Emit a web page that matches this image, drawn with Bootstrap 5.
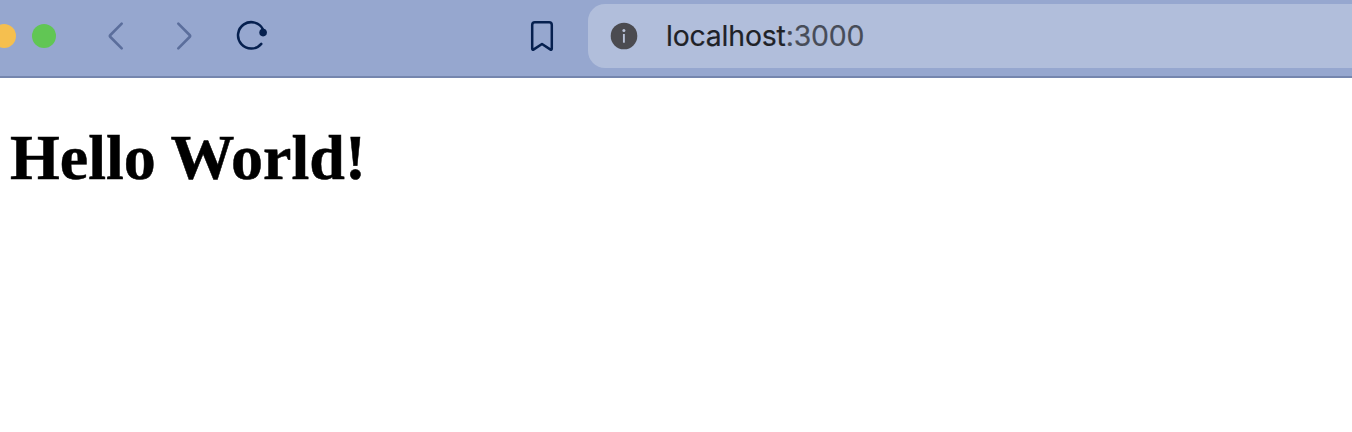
<!DOCTYPE html>
<html lang="en">
<head>
<meta charset="utf-8">
<meta name="viewport" content="width=device-width, initial-scale=1">
<title>localhost:3000</title>
<link href="https://cdn.jsdelivr.net/npm/bootstrap@5.3.0/dist/css/bootstrap.min.css" rel="stylesheet">
<style>
body { background: #fff; }
.toolbar { height: 78px; padding-bottom: 4px; background: #96a7cf; border-bottom: 2px solid #7586ae; }
.light { width: 24px; height: 24px; }
.light-min { background: #f5bf4f; margin-left: -8px; }
.light-max { background: #61c654; margin-left: 16px; }
.tool { width: 40px; height: 40px; padding: 0; border: 0; background: none; flex: none; }
.tool svg, .info { display: block; }
.dim { color: #5b6e9c; }
.ink { color: #06204f; }
.back { margin-left: 40px; }
.gap-nav { margin-left: 28px; }
.save { margin-left: 250px; }
.address { height: 64px; margin-left: 26px; padding-left: 22px; background: #b1bedb; border-radius: 17px 0 0 17px; }
.url { margin-left: 28px; font: 400 28.4px/40px Inter, sans-serif; letter-spacing: -.18px; color: #1f2227; -webkit-text-stroke: .2px currentColor; }
.port { color: #474c58; }
.greeting { margin: 0; padding: 43px 0 0 10px; font: 700 64px/74px "Liberation Serif", serif; color: #000; -webkit-text-stroke: .5px #000; }
</style>
</head>
<body class="overflow-hidden">
<header class="toolbar d-flex align-items-center">
  <span class="light light-min rounded-circle flex-shrink-0"></span>
  <span class="light light-max rounded-circle flex-shrink-0"></span>
  <button class="tool dim back" aria-label="Back">
    <svg width="40" height="40" fill="none" stroke="currentColor" stroke-width="2.6" stroke-linecap="round" stroke-linejoin="round"><path d="M25.7 7.6 14.4 19q-1 1 0 2L25.7 32.4"/></svg>
  </button>
  <button class="tool dim gap-nav" aria-label="Forward">
    <svg width="40" height="40" fill="none" stroke="currentColor" stroke-width="2.6" stroke-linecap="round" stroke-linejoin="round"><path d="M14.3 7.6 25.6 19q1 1 0 2L14.3 32.4"/></svg>
  </button>
  <button class="tool ink gap-nav" aria-label="Reload">
    <svg width="40" height="40" fill="none" stroke="currentColor" stroke-width="2.5" stroke-linecap="round"><path d="M29.3 27.9A13.2 13.2 0 1 1 31.1 13.6"/><circle cx="31.1" cy="16.6" r="3.8" fill="currentColor" stroke="none"/></svg>
  </button>
  <button class="tool ink save" aria-label="Bookmark">
    <svg width="40" height="40" fill="none" stroke="currentColor" stroke-width="2.5" stroke-linecap="round" stroke-linejoin="round"><path d="M12.9 6.2h14.2q2.7 0 2.7 2.7v23.7q0 1.8-1.6.8L20 28l-8.2 5.4q-1.6 1-1.6-.8V8.9q0-2.7 2.7-2.7z"/></svg>
  </button>
  <div class="address d-flex align-items-center flex-grow-1">
    <svg class="info" width="28" height="28"><circle cx="14" cy="14" r="13.3" fill="#4b4b50"/><circle cx="13.9" cy="8.6" r="1.5" fill="#b9c2d8"/><path d="M13.9 12v8.7" fill="none" stroke="#b9c2d8" stroke-width="1.9"/></svg>
    <span class="url">localhost<span class="port">:3000</span></span>
  </div>
</header>
<main><h1 class="greeting">Hello World!</h1></main>
<script src="https://cdn.jsdelivr.net/npm/bootstrap@5.3.0/dist/js/bootstrap.bundle.min.js"></script>
</body>
</html>
